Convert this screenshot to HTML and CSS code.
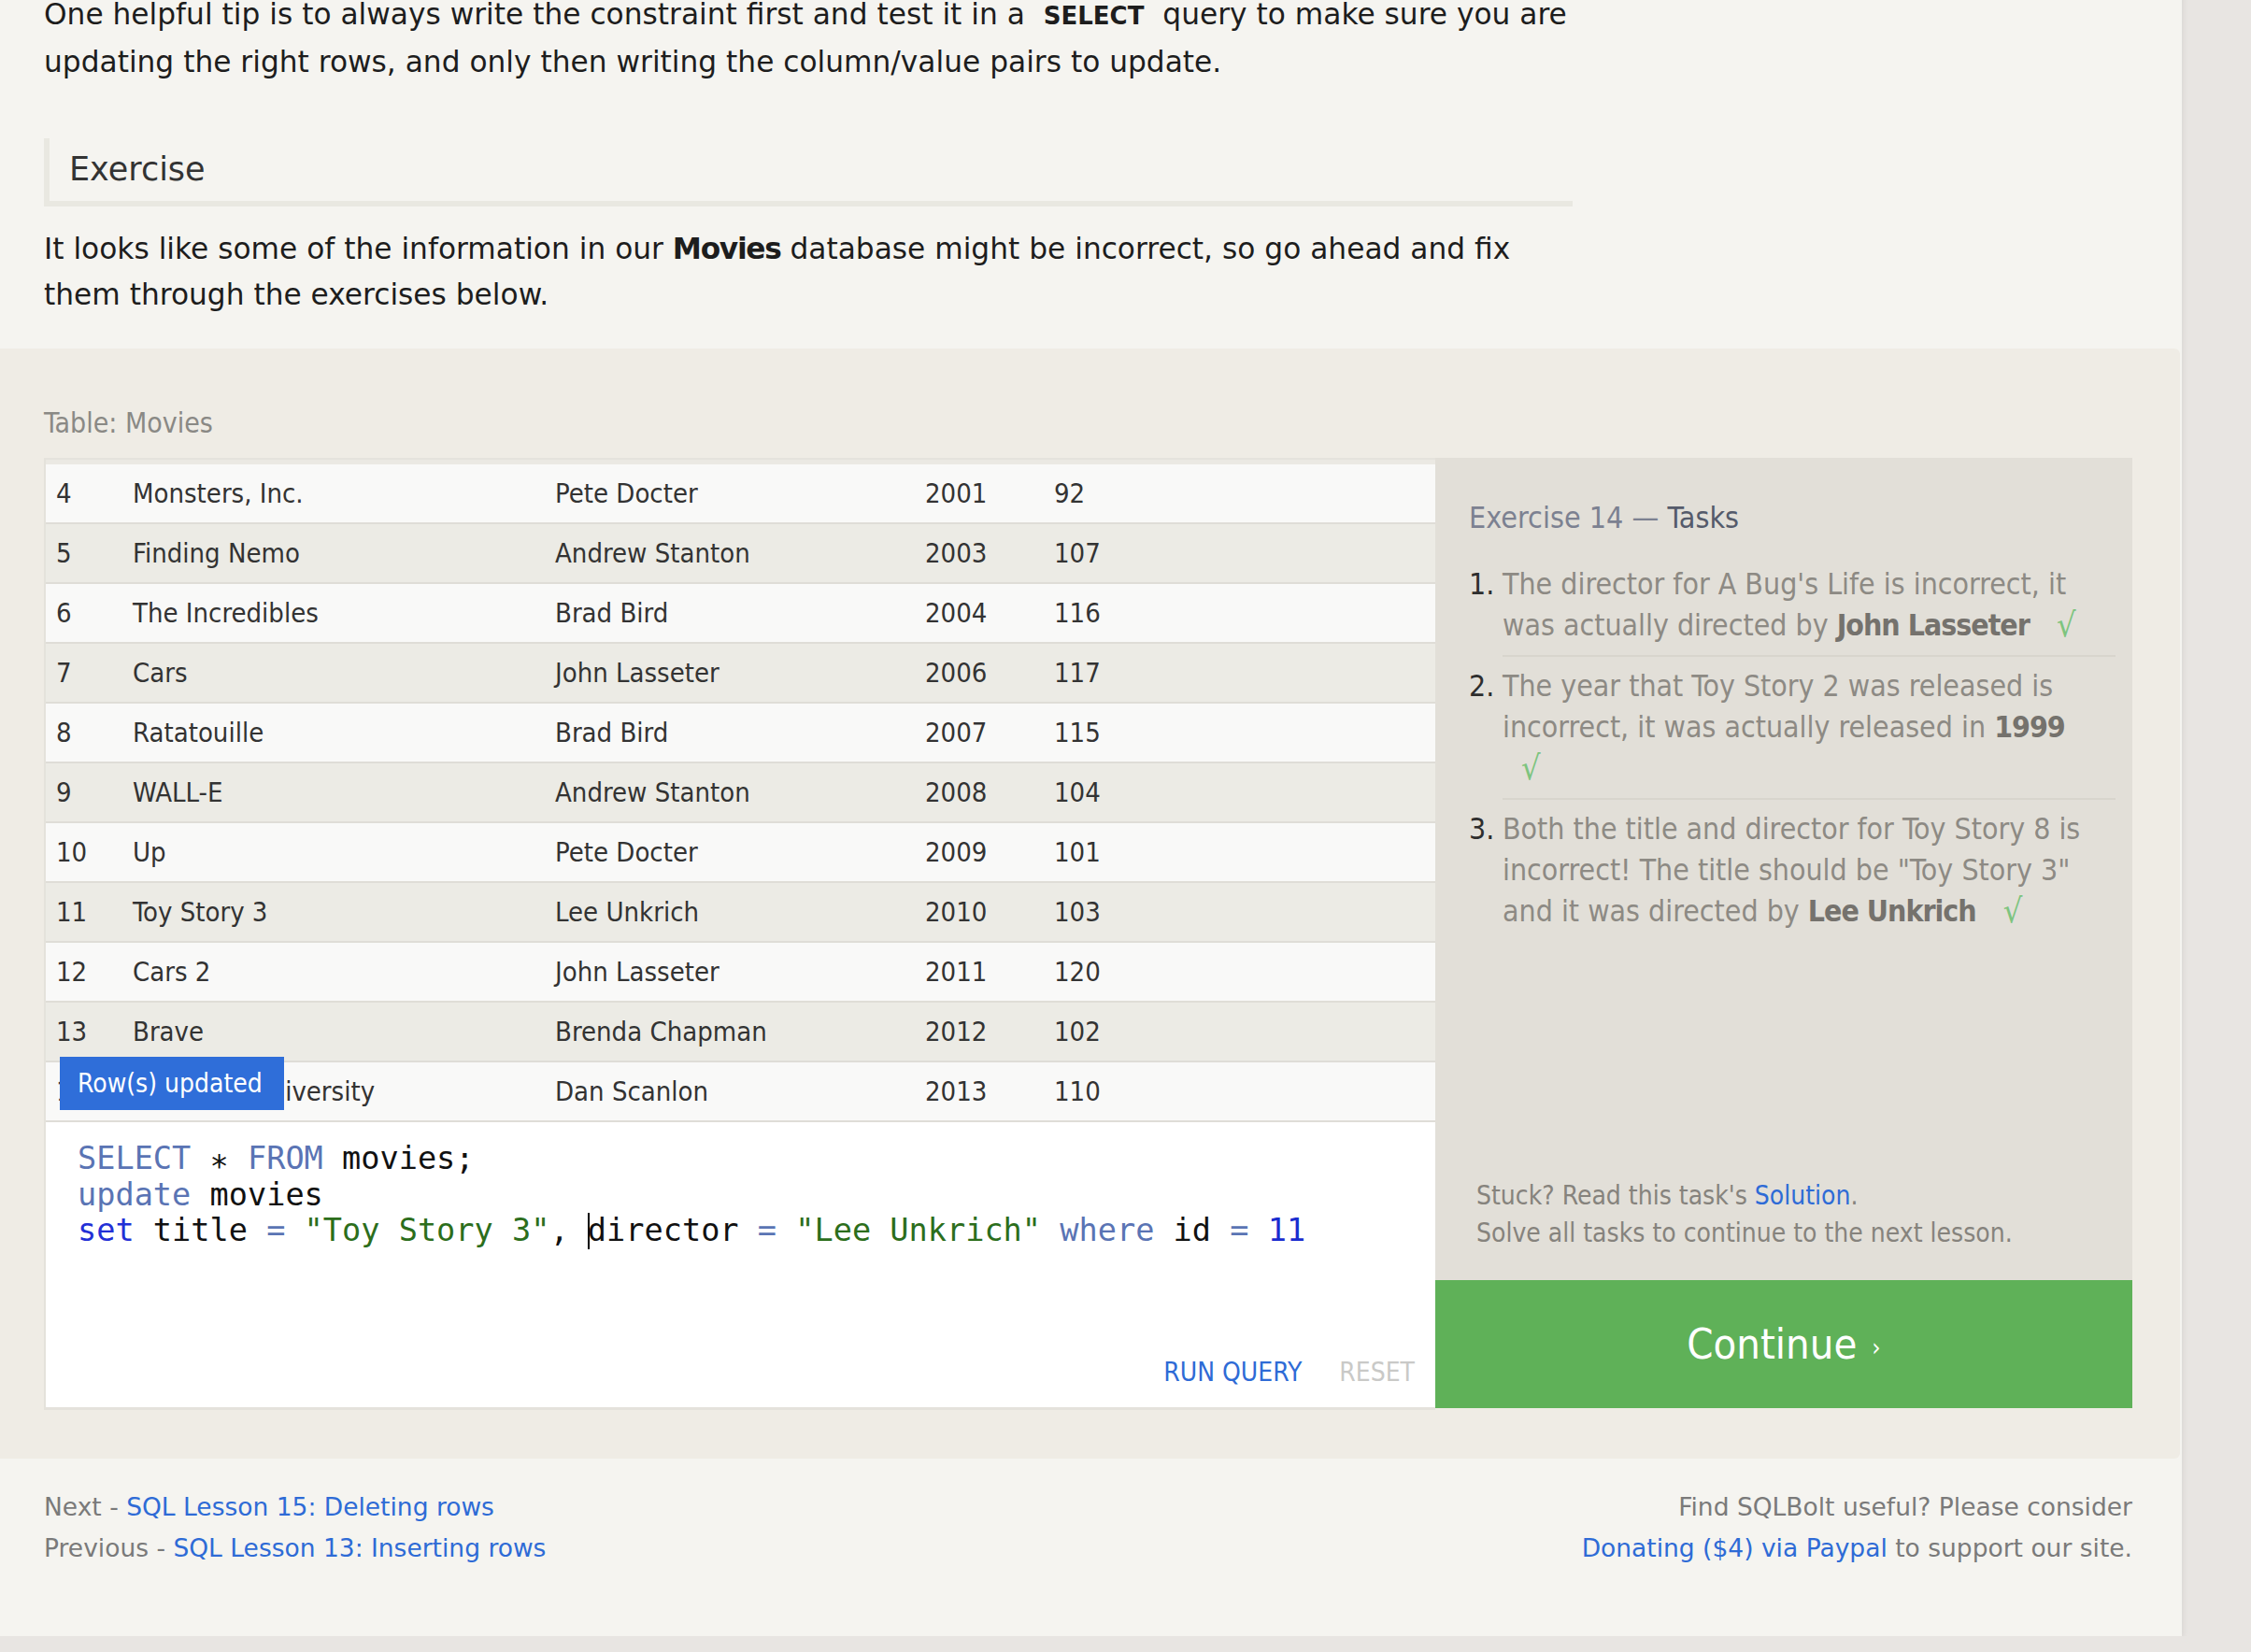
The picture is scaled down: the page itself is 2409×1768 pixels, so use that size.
FILE: index.html
```html
<!DOCTYPE html>
<html lang="en">
<head>
<meta charset="utf-8">
<title>SQL Lesson 14: Updating rows</title>
<link rel="stylesheet" href="styles.css">
</head>
<body>
<div class="page">
  <div class="lesson">
    <p class="text first">One helpful tip is to always write the constraint first and test it in a <code>SELECT</code> query to make sure you are<br>updating the right rows, and only then writing the column/value pairs to update.</p>
    <h3 class="section">Exercise</h3>
    <p class="text">It looks like some of the information in our <b>Movies</b> database might be incorrect, so go ahead and fix<br>them through the exercises below.</p>
  </div>

  <div class="band">
    <div class="table-label">Table: Movies</div>
    <div class="widget">
      <div class="work">
        <div class="results">
          <div class="row"><span>4</span><span>Monsters, Inc.</span><span>Pete Docter</span><span>2001</span><span>92</span></div>
          <div class="row"><span>5</span><span>Finding Nemo</span><span>Andrew Stanton</span><span>2003</span><span>107</span></div>
          <div class="row"><span>6</span><span>The Incredibles</span><span>Brad Bird</span><span>2004</span><span>116</span></div>
          <div class="row"><span>7</span><span>Cars</span><span>John Lasseter</span><span>2006</span><span>117</span></div>
          <div class="row"><span>8</span><span>Ratatouille</span><span>Brad Bird</span><span>2007</span><span>115</span></div>
          <div class="row"><span>9</span><span>WALL-E</span><span>Andrew Stanton</span><span>2008</span><span>104</span></div>
          <div class="row"><span>10</span><span>Up</span><span>Pete Docter</span><span>2009</span><span>101</span></div>
          <div class="row"><span>11</span><span>Toy Story 3</span><span>Lee Unkrich</span><span>2010</span><span>103</span></div>
          <div class="row"><span>12</span><span>Cars 2</span><span>John Lasseter</span><span>2011</span><span>120</span></div>
          <div class="row"><span>13</span><span>Brave</span><span>Brenda Chapman</span><span>2012</span><span>102</span></div>
          <div class="row"><span>14</span><span>Monsters University</span><span>Dan Scanlon</span><span>2013</span><span>110</span></div>
        </div>
        <div class="badge">Row(s) updated</div>
        <div class="editor">
<pre class="code"><span class="kw">SELECT</span> <span class="star">*</span> <span class="kw">FROM</span> movies;
<span class="kw">update</span> movies
<span class="kw2">set</span> title <span class="op">=</span> <span class="str">"Toy Story 3"</span>, <span class="caret"></span>director <span class="op">=</span> <span class="str">"Lee Unkrich"</span> <span class="kw">where</span> id <span class="op">=</span> <span class="num">11</span></pre>
          <div class="actions"><span class="run">RUN QUERY</span><span class="reset">RESET</span></div>
        </div>
      </div>
      <div class="side">
        <div class="tasks">
          <h4><span class="ex">Exercise 14 —</span> Tasks</h4>
          <ol>
            <li><span class="n">1.</span><span class="t">The director for A Bug's Life is incorrect, it<br>was actually directed by <b>John Lasseter</b> <span class="check">√</span></span></li>
            <li><span class="n">2.</span><span class="t">The year that Toy Story 2 was released is<br>incorrect, it was actually released in <b>1999</b><br><span class="check">√</span></span></li>
            <li><span class="n">3.</span><span class="t">Both the title and director for Toy Story 8 is<br>incorrect! The title should be "Toy Story 3"<br>and it was directed by <b>Lee Unkrich</b> <span class="check">√</span></span></li>
          </ol>
        </div>
        <div class="stuck">Stuck? Read this task's <a href="#">Solution</a>.<br>Solve all tasks to continue to the next lesson.</div>
        <a class="continue" href="#">Continue<span class="arrow">›</span></a>
      </div>
    </div>
  </div>

  <div class="footer">
    <div class="nav">Next - <a href="#">SQL Lesson 15: Deleting rows</a><br>Previous - <a href="#">SQL Lesson 13: Inserting rows</a></div>
    <div class="donate">Find SQLBolt useful? Please consider<br><a href="#">Donating ($4) via Paypal</a> to support our site.</div>
  </div>
</div>
</body>
</html>
```
FILE: styles.css
```css
html, body {
  margin: 0;
  padding: 0;
  background: #e8e5e2;
}
body {
  font-family: "DejaVu Sans", "Liberation Sans", sans-serif;
  overflow: hidden;
}
a { text-decoration: none; color: #2e6bd6; }

.page {
  width: 2335px;
  background: #f5f4f0;
  box-shadow: 2px 2px 6px rgba(0, 0, 0, 0.06);
}

/* lesson text */
.lesson {
  padding: 0 0 34px 47px;
}
.text {
  margin: 0;
  font-size: 31.25px;
  line-height: 48.5px;
  color: #1d1d1d;
}
.text.first { margin-top: -9px; }
.text b { letter-spacing: -1.3px; }
.text code {
  font-family: "DejaVu Sans", sans-serif;
  font-weight: bold;
  font-size: 26px;
  padding: 0 10px;
}
.section {
  margin: 58px 0 21px;
  width: 1636px;
  box-sizing: border-box;
  border-left: 6px solid #e9e8e1;
  border-bottom: 6px solid #e9e8e1;
  padding: 11px 0 12px 21px;
  font-size: 35px;
  line-height: 44px;
  font-weight: normal;
  color: #333;
}

/* exercise band */
.band {
  background: #efece5;
  margin-right: 2px;
  border-radius: 0 6px 6px 0;
  padding: 60px 51px 52px 47px;
  font-family: "DejaVu Sans Condensed", "DejaVu Sans", sans-serif;
  font-stretch: condensed;
}
.table-label {
  font-size: 30px;
  line-height: 40px;
  color: #8a8985;
  margin-bottom: 17px;
}
.widget {
  display: flex;
  align-items: stretch;
}
.work {
  width: 1489px;
  box-sizing: border-box;
  border-left: 2px solid #e4e2db;
  position: relative;
}
.results {
  border-top: 2px solid #e5e3dd;
  padding-top: 5px;
  background: #ebe9e3;
}
.row {
  display: grid;
  grid-template-columns: 82px 452px 396px 138px 1fr;
  height: 62px;
  line-height: 62px;
  border-bottom: 2px solid #dfddd7;
  font-size: 29px;
  color: #333;
  background: #f9f9f8;
  white-space: nowrap;
}
.row:nth-child(even) { background: #ecebe5; }
.row > span { padding-left: 11px; }

.badge {
  position: absolute;
  left: 15px;
  top: 641px;
  width: 240px;
  height: 57px;
  line-height: 57px;
  box-sizing: border-box;
  padding-left: 19px;
  background: #2f6ed9;
  color: #fff;
  font-size: 28px;
}

.editor {
  height: 305px;
  background: #fff;
  border-bottom: 3px solid #e4e2dc;
  display: flex;
  flex-direction: column;
}
.code {
  margin: 0;
  padding: 20px 0 0 34px;
  font-family: "DejaVu Sans Mono", "Liberation Mono", monospace;
  font-size: 33.6px;
  line-height: 38.5px;
  color: #111;
}
.code .kw { color: #5a74b4; }
.code .kw2 { color: #2330d6; }
.code .op { color: #5a74b4; }
.code .str { color: #2c6e1c; }
.code .num { color: #1a2ccf; }
.code .star { vertical-align: -0.28em; line-height: 0; }
.caret {
  display: inline-block;
  width: 0;
  height: 39px;
  border-left: 2px solid #000;
  margin-right: -2px;
  vertical-align: -9px;
}
.actions {
  margin-top: auto;
  display: flex;
  justify-content: flex-end;
  gap: 40px;
  padding: 0 22px 20px 0;
  font-size: 28px;
  line-height: 34px;
}
.run { color: #2e6bd6; }
.reset { color: #c9c9c7; }

/* side panel */
.side {
  width: 746px;
  margin-bottom: 2px;
  background: #e2dfd8;
  display: flex;
  flex-direction: column;
}
.tasks {
  padding: 44px 18px 0 36px;
}
.tasks h4 {
  margin: 0;
  font-weight: normal;
  font-size: 32px;
  line-height: 40px;
  color: #555b6b;
}
.tasks h4 .ex { color: #7c8191; }
.tasks ol {
  margin: 20px 0 0;
  padding: 0;
  list-style: none;
  font-size: 31.8px;
  line-height: 44px;
  color: #8d8a84;
}
.tasks li {
  display: flex;
}
.tasks .n {
  width: 36px;
  flex: none;
  padding-top: 9px;
  color: #2e2e2e;
}
.tasks .t {
  flex: 1;
  padding: 9px 0 10px;
  border-bottom: 2px solid #d8d5cd;
  white-space: nowrap;
}
.tasks li:last-child .t { border-bottom: none; }
.tasks b { color: #75726d; letter-spacing: -1px; }
.check {
  display: inline-block;
  margin-left: 20px;
  font-size: 36px;
  line-height: 44px;
  vertical-align: top;
  color: #7dc47e;
}
.stuck {
  margin-top: auto;
  padding: 0 0 30px 44px;
  font-size: 28px;
  line-height: 40px;
  color: #86837d;
}
.continue {
  display: block;
  height: 137px;
  line-height: 137px;
  text-align: center;
  background: #5fb158;
  color: #fff;
  font-size: 45px;
}
.continue .arrow {
  font-size: 26px;
  margin-left: 16px;
  vertical-align: 3px;
}

/* footer */
.footer {
  display: flex;
  justify-content: space-between;
  padding: 30px 53px 73px 47px;
  font-size: 26.5px;
  line-height: 43.5px;
  color: #7a7a7a;
}
.donate { text-align: right; }
```
